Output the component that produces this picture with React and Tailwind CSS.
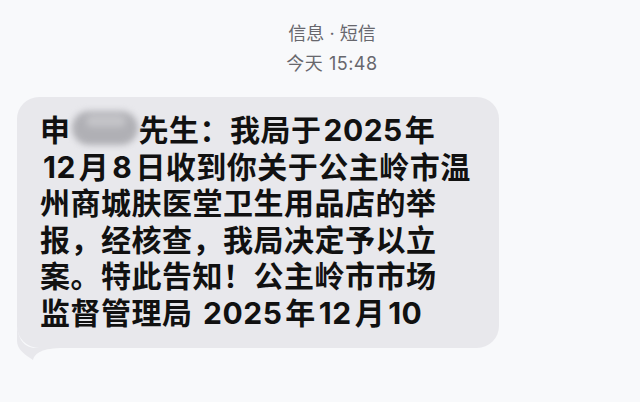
function Line({ text }) {
  // digits get a little room on each side, like iOS spacing between CJK and Latin
  const parts = text.split(/(\d+)/);
  return (
    <div>
      {parts.map((p, i) =>
        /^\d+$/.test(p) ? (
          <span key={i} className="mx-[3px]">
            {p}
          </span>
        ) : (
          <span key={i}>{p}</span>
        )
      )}
    </div>
  );
}

export default function App() {
  const lines = [
    "12月8日收到你关于公主岭市温",
    "州商城肤医堂卫生用品店的举",
    "报，经核查，我局决定予以立",
    "案。特此告知！公主岭市市场",
    "监督管理局 2025年12月10",
  ];

  return (
    <div className="w-[640px] h-[402px] overflow-hidden bg-[#f8f9fb] font-['Inter','Noto_Sans_CJK_SC',sans-serif]">
      {/* header */}
      <div className="pt-[19px] pl-[24px] text-center text-[18px] leading-[30px] text-[#67676d]">
        <div>信息 · 短信</div>
        <div className="tracking-[0.5px]">今天 15:48</div>
      </div>

      {/* bubble */}
      <div className="relative mt-[18px] ml-[17px] w-[482px] h-[251px] rounded-[22px] bg-[#e8e8ec] pl-[23px] pt-[15px]">
        <div className="text-[30px] leading-[36.5px] font-bold tracking-[0.5px] text-[#111111] whitespace-nowrap">
          <div className="flex items-center">
            <span>申</span>
            <span className="relative inline-block w-[66px] h-[34px] mx-[1px] -mt-[4px] rounded-full bg-[#b0b0b5] blur-[3px]">
              <span className="absolute left-[14px] top-[4px] w-[40px] h-[12px] rounded-full bg-[#c4c4c8]" />
            </span>
            <span>先生：我局于</span>
            <span className="mx-[2px]">2025</span>
            <span>年</span>
          </div>
          {lines.map((l, i) => (
            <Line key={i} text={l} />
          ))}
        </div>
        <svg
          className="absolute left-[-1px] bottom-[-13px]"
          width="50"
          height="40"
          viewBox="0 0 50 40"
        >
          <path
            d="M1 0 L1 20 C1 28 8 33 17 39 C19 32 26 27 48 27 L20 27 C8 27 1 18 1 0 Z"
            fill="#e8e8ec"
          />
        </svg>
      </div>
    </div>
  );
}
